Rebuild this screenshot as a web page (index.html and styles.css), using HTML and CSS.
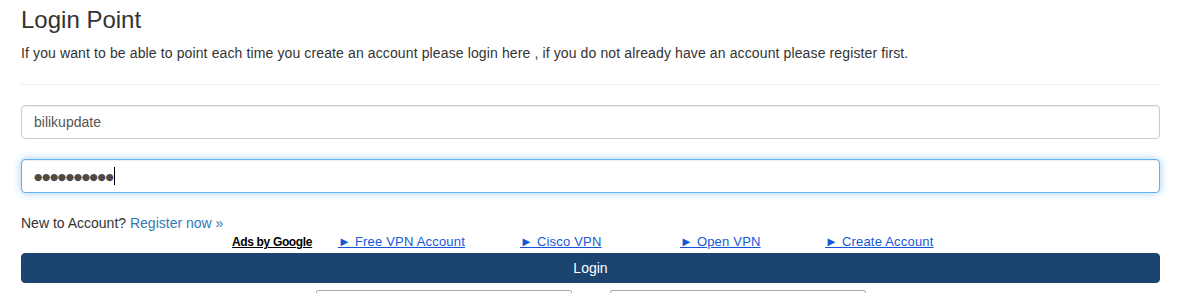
FILE: index.html
```html
<!DOCTYPE html>
<html lang="en">
<head>
  <meta charset="UTF-8">
  <meta name="viewport" content="width=device-width, initial-scale=1.0">
  <title>Login Point</title>
  <link rel="stylesheet" href="styles.css">
</head>
<body>
  <div class="container">
    <h1>Login Point</h1>
    <p class="intro">If you want to be able to point each time you create an account please login here , if you do not already have an account please register first.</p>
    <hr>

    <form class="login-form">
      <input class="form-control" type="text" value="bilikupdate">
      <div class="field-wrap">
        <input class="form-control is-focus pass" type="text" value="&#9679;&#9679;&#9679;&#9679;&#9679;&#9679;&#9679;&#9679;&#9679;&#9679;">
        <span class="caret"></span>
      </div>

      <p class="register">New to Account? <a href="#">Register now &raquo;</a></p>

      <div class="ads">
        <span class="ads-label">Ads by Google</span>
        <a href="#">&#9658; Free VPN Account</a>
        <a href="#">&#9658; Cisco VPN</a>
        <a href="#">&#9658; Open VPN</a>
        <a href="#">&#9658; Create Account</a>
      </div>

      <button class="btn-login" type="button">Login</button>

      <div class="selects">
        <div class="select-box"></div>
        <div class="select-box"></div>
      </div>
    </form>
  </div>
</body>
</html>
```

FILE: styles.css
```css
body {
  margin: 0;
  padding: 0;
  font-family: 'Liberation Sans', Arial, sans-serif;
  font-size: 14px;
  color: #333;
  background-color: #fff;
}

.container {
  width: 1139px;
  padding: 7px 0 0 21px;
}

h1 {
  margin: 0;
  font-size: 24px;
  font-weight: 400;
  line-height: 26px;
  color: #333;
}

.intro {
  margin: 10px 0 0;
  line-height: 20px;
  letter-spacing: 0.12px;
}

hr {
  margin: 21px 0 0;
  border: 0;
  border-top: 1px solid #eee;
}

.login-form {
  padding-top: 20px;
}

.form-control {
  display: block;
  box-sizing: border-box;
  width: 100%;
  height: 34px;
  margin: 0 0 20px;
  padding: 6px 12px;
  font-family: 'Liberation Sans', Arial, sans-serif;
  font-size: 14px;
  color: #555;
  background-color: #fff;
  border: 1px solid #ccc;
  border-radius: 4px;
  box-shadow: inset 0 1px 1px rgba(0, 0, 0, 0.075);
  outline: none;
}

.form-control.is-focus {
  border-color: #66afe9;
  box-shadow: inset 0 1px 1px rgba(0, 0, 0, 0.075), 0 0 8px rgba(102, 175, 233, 0.6);
}

.field-wrap {
  position: relative;
}

.form-control.pass {
  font-family: 'DejaVu Sans', sans-serif;
  font-size: 9.5px;
  letter-spacing: -0.35px;
  color: #4a4a4a;
}

.caret {
  position: absolute;
  left: 93px;
  top: 8px;
  width: 1px;
  height: 18px;
  background-color: #000;
}

.register {
  margin: 0;
  padding-top: 1px;
  line-height: 18px;
}

.register a {
  color: #337ab7;
  text-decoration: none;
}

.ads {
  display: grid;
  grid-template-columns: 106px 182px 160px 145px auto;
  margin-left: 211px;
  font-size: 13px;
  line-height: 20px;
  letter-spacing: 0.2px;
}

.ads a {
  justify-self: start;
  color: #1558d6;
  text-decoration: underline;
}

.ads-label {
  justify-self: start;
  font-size: 12px;
  font-weight: 700;
  letter-spacing: -0.35px;
  color: #000;
  text-decoration: underline;
}

.btn-login {
  display: block;
  width: 100%;
  height: 30px;
  margin-top: 1px;
  padding: 0;
  font-family: 'Liberation Sans', Arial, sans-serif;
  font-size: 14px;
  color: #fff;
  background-color: #1b4471;
  border: 1px solid #1b416c;
  border-radius: 4px;
}

.selects {
  display: flex;
  justify-content: center;
  gap: 38px;
  padding-top: 7px;
}

.select-box {
  width: 254px;
  height: 20px;
  border: 1px solid #a9a9a9;
  border-radius: 2px;
}
```
